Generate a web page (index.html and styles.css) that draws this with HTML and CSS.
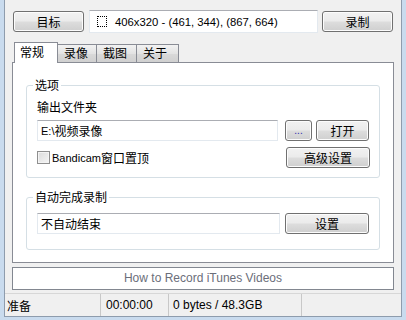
FILE: index.html
```html
<!DOCTYPE html>
<html>
<head>
<meta charset="utf-8">
<link rel="stylesheet" href="styles.css">
</head>
<body>
<div class="window">
  <div class="toprow">
    <button class="btn btn-target">目标</button>
    <div class="field region"><span class="dots"></span><span class="lat">406x320 - (461, 344), (867, 664)</span></div>
    <button class="btn btn-rec">录制</button>
  </div>
  <div class="tabstrip">
    <div class="tab sel">常规</div>
    <div class="tab">录像</div>
    <div class="tab">截图</div>
    <div class="tab">关于</div>
  </div>
  <div class="panel">
    <fieldset class="group g1">
      <legend>选项</legend>
      <div class="label">输出文件夹</div>
      <div class="row">
        <div class="field path"><span class="lat">E:\</span>视频录像</div>
        <button class="btn btn-dots">...</button>
        <button class="btn btn-open">打开</button>
      </div>
      <div class="row row2">
        <label class="check"><span class="box"></span><span class="lat">Bandicam</span>窗口置顶</label>
        <button class="btn btn-adv">高级设置</button>
      </div>
    </fieldset>
    <fieldset class="group g2">
      <legend>自动完成录制</legend>
      <div class="row">
        <div class="field auto">不自动结束</div>
        <button class="btn btn-set">设置</button>
      </div>
    </fieldset>
  </div>
  <div class="linkbox lat">How to Record iTunes Videos</div>
  <div class="status">
    <div class="cell c1">准备</div>
    <div class="cell c2 lat">00:00:00</div>
    <div class="cell c3 lat">0 bytes / 48.3GB</div>
    <div class="cell c4"></div>
  </div>
</div>
</body>
</html>
```

FILE: styles.css
```css
* { box-sizing: border-box; }
html, body { margin: 0; padding: 0; }
body {
  width: 406px;
  height: 320px;
  background: #c9dbee;
  font-family: "Noto Sans CJK SC", "Liberation Sans", sans-serif;
  font-size: 12px;
  color: #000;
  overflow: hidden;
}
.lat { font-family: "Liberation Sans", "Noto Sans CJK SC", sans-serif; font-size: 11px; }
.window {
  margin-left: 4px;
  width: 398px;
  height: 317px;
  background: #f0f0f0;
  border: 1px solid #8e9cad;
  border-top: none;
  display: flex;
  flex-direction: column;
}
.toprow {
  display: flex;
  align-items: center;
  padding: 10px 0 0 8px;
  height: 33px;
}
.btn {
  font-family: "Noto Sans CJK SC", sans-serif;
  font-size: 12px;
  height: 21px;
  padding: 0;
  border: 1px solid #707070;
  border-radius: 3px;
  background: linear-gradient(#f2f2f2 0%, #ebebeb 48%, #dddddd 52%, #cfcfcf 100%);
  box-shadow: inset 0 0 0 1px #fcfcfc;
  color: #000;
  line-height: 17px;
}
.btn-target { width: 71px; }
.btn-rec { width: 71px; margin-left: 4px; }
.field {
  background: #fff;
  border: 1px solid #e3e9ef;
  border-top-color: #abadb3;
  display: flex;
  align-items: center;
}
.region {
  width: 229px;
  height: 23px;
  margin-left: 5px;
  padding-left: 7px;
}
.region .lat { font-size: 11.3px; }
.dots {
  width: 10px;
  height: 11px;
  border: 1px dotted #000;
  margin-right: 8px;
}
.tabstrip {
  display: flex;
  align-items: flex-end;
  margin: 9px 0 0 9px;
  height: 20px;
  position: relative;
  z-index: 1;
}
.tab {
  height: 18px;
  border: 1px solid #898c95;
  border-bottom: none;
  margin-left: -1px;
  background: linear-gradient(#f2f2f2, #e3e3e3 50%, #d9d9d9 51%, #d0d0d0);
  padding: 0 6px;
  line-height: 16px;
  text-align: left;
}
.tab:nth-child(2) { width: 40px; }
.tab:nth-child(3) { width: 41px; }
.tab:nth-child(4) { width: 43px; }
.tab.sel {
  height: 21px;
  width: 44px;
  background: #fff;
  margin-bottom: -1px;
  margin-left: 0;
  margin-right: -1px;
  line-height: 18px;
  padding-left: 5px;
}
.tab.sel + .tab { margin-left: 0; }
.panel {
  margin: 0 0 0 7px;
  width: 382px;
  height: 201px;
  background: #fff;
  border: 1px solid #898c95;
  padding: 15px 13px 0 13px;
  display: flex;
  flex-direction: column;
}
.group {
  margin: 0;
  border: 1px solid #d5dfe5;
  border-radius: 3px;
  padding: 0 0 0 10px;
  min-width: 0;
}
legend {
  padding: 0 2px;
  margin-left: -4px;
  line-height: 14px;
  height: 14px;
}
.g1 { height: 100px; }
.g2 { height: 60px; margin-top: 12px; }
.label { height: 16px; line-height: 16px; margin-top: 7px; }
.row { display: flex; align-items: center; margin-top: 5px; }
.path, .auto {
  height: 21px;
  padding-left: 3px;
}
.path { width: 241px; }
.auto { width: 243px; margin-top: 8px; }
.g2 .row { margin-top: 1px; }
.btn-dots { width: 27px; margin-left: 7px; font-family: "Liberation Sans", sans-serif; font-size: 10px; color: #2b2bb0; line-height: 12px; }
.btn-open { width: 53px; margin-left: 4px; }
.btn-set { width: 84px; margin-left: 5px; margin-top: 8px; }
.row2 { margin-top: 6px; justify-content: space-between; width: 333px; }
.check { display: flex; align-items: center; height: 16px; }
.box {
  width: 13px;
  height: 13px;
  border: 1px solid #8f8f8f;
  background: linear-gradient(135deg, #dcdcdc, #f5f5f5);
  box-shadow: inset 0 0 0 1px #f4f4f4;
  margin-right: 2px;
}
.btn-adv { width: 84px; }
.linkbox {
  margin: 4px 0 0 7px;
  width: 382px;
  height: 23px;
  border: 1px solid #828790;
  background: #fff;
  color: #6b6e7a;
  text-align: center;
  line-height: 21px;
  font-size: 12px;
}
.status {
  margin-top: 3px;
  flex: 1;
  display: flex;
  align-items: stretch;
  border-top: 1px solid #d7d7d7;
}
.cell {
  display: flex;
  align-items: center;
  padding-left: 2px;
  border-right: 1px solid #c8c8c8;
}
.c1 { width: 96px; }
.c2 { width: 68px; padding-left: 5px; font-size: 12px; }
.c3 { width: 133px; padding-left: 4px; font-size: 12px; }
.c4 { flex: 1; border-right: none; }
```
